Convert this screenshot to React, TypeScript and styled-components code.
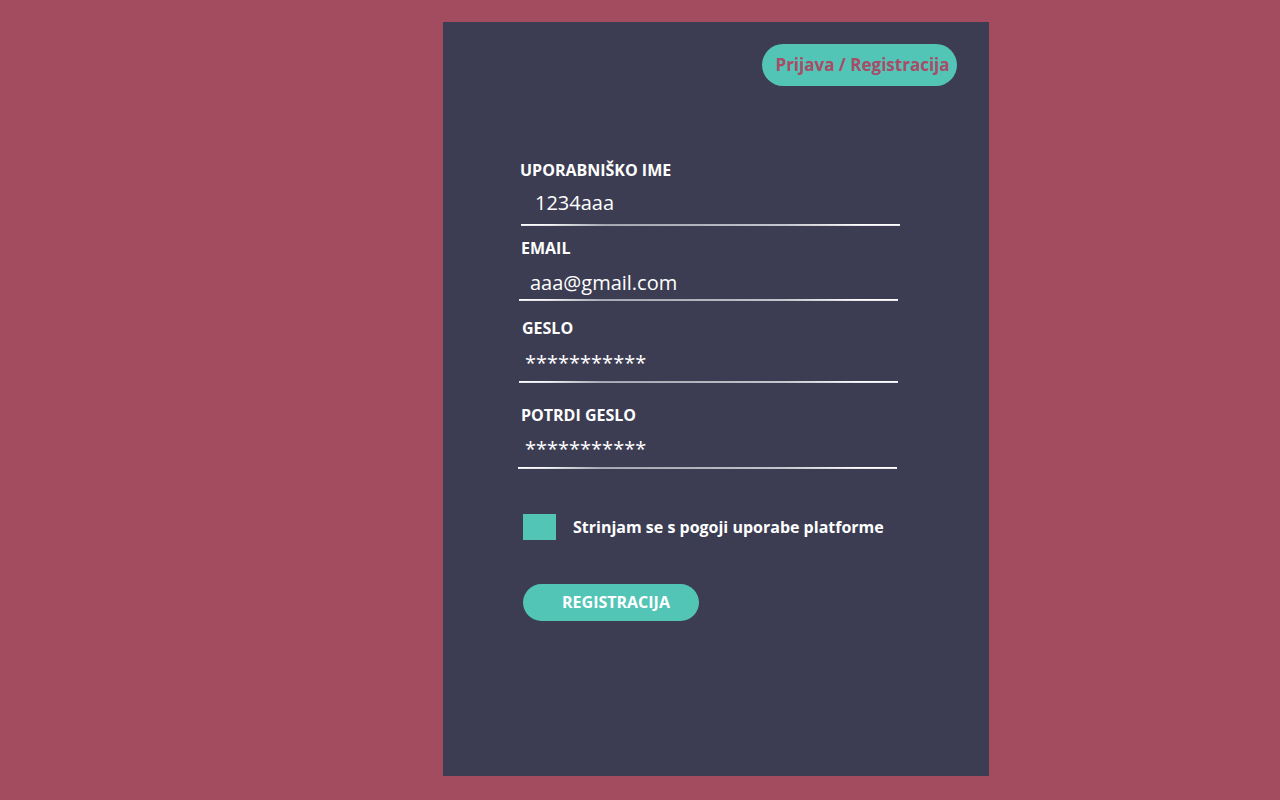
import React from "react";
import styled, { createGlobalStyle } from "styled-components";

const Global = createGlobalStyle`
  html, body { margin: 0; padding: 0; background: #a34b5f; }
  body { font-family: "Open Sans", "Noto Sans", sans-serif; }
`;

const Page = styled.div`
  min-height: 800px;
  box-sizing: border-box;
  padding: 22px 0 0 443px;
  background: #a34b5f;
`;

const Panel = styled.div`
  width: 546px;
  height: 754px;
  background: #3c3d53;
  box-sizing: border-box;
  padding: 22px 32px 0 77px;
  display: flex;
  flex-direction: column;
`;

const Header = styled.div`
  display: flex;
  justify-content: flex-end;
`;

const TopButton = styled.button`
  width: 195px;
  height: 42px;
  border: none;
  border-radius: 21px;
  background: #52c5b7;
  color: #a84c67;
  font-family: "Open Sans", sans-serif;
  font-weight: 700;
  font-size: 17px;
  padding: 0 0 2px 6px;
  white-space: nowrap;
  cursor: pointer;
`;

const Form = styled.form`
  margin-top: 74px;
  width: 382px;
  display: flex;
  flex-direction: column;
`;

const Field = styled.div<{ $gap: number }>`
  display: flex;
  flex-direction: column;
  margin-top: ${(p) => p.$gap}px;
`;

const Label = styled.label<{ $dx: number }>`
  color: #ffffff;
  font-weight: 700;
  font-size: 16px;
  line-height: 20px;
  margin-left: ${(p) => p.$dx}px;
`;

const Value = styled.div<{ $dx: number; $top: number }>`
  color: #ffffff;
  font-size: 20px;
  line-height: 26px;
  margin-top: ${(p) => p.$top}px;
  margin-left: ${(p) => p.$dx}px;
`;

const Underline = styled.div<{ $top: number; $dx: number }>`
  width: 379px;
  height: 1px;
  margin-top: ${(p) => p.$top}px;
  margin-left: ${(p) => p.$dx}px;
  background: linear-gradient(
    90deg,
    #ffffff 0%,
    #f4f4f6 8%,
    #a4a4b0 22%,
    #b0b0ba 45%,
    #c8c8d0 70%,
    #ffffff 90%,
    #ffffff 100%
  );
  border-bottom: 1px solid rgba(190, 190, 200, 0.35);
`;

const CheckRow = styled.div`
  display: flex;
  align-items: center;
  margin-top: 45px;
  margin-left: 3px;
  gap: 17px;
`;

const Box = styled.span`
  width: 33px;
  height: 26px;
  background: #52c5b7;
  display: block;
`;

const CheckText = styled.span`
  color: #ffffff;
  font-weight: 700;
  font-size: 16px;
`;

const Submit = styled.button`
  align-self: flex-start;
  margin-top: 44px;
  margin-left: 3px;
  width: 176px;
  height: 37px;
  border: none;
  border-radius: 19px;
  background: #52c5b7;
  color: #ffffff;
  font-family: "Open Sans", sans-serif;
  font-weight: 700;
  font-size: 16px;
  padding: 0 0 1px 10px;
  cursor: pointer;
`;

const fields = [
  { label: "UPORABNIŠKO IME", value: "1234aaa", gap: 0, ldx: 0, vdx: 15, vtop: 10, ltop: 8, lnx: 1 },
  { label: "EMAIL", value: "aaa@gmail.com", gap: 12, ldx: 1, vdx: 10, vtop: 12, ltop: 3, lnx: -1 },
  { label: "GESLO", value: "***********", gap: 17, ldx: 2, vdx: 5, vtop: 12, ltop: 5, lnx: -1 },
  { label: "POTRDI GESLO", value: "***********", gap: 22, ldx: 1, vdx: 5, vtop: 11, ltop: 5, lnx: -2 },
];

export default function App() {
  return (
    <>
      <Global />
      <Page>
        <Panel>
          <Header>
            <TopButton type="button">Prijava / Registracija</TopButton>
          </Header>
          <Form onSubmit={(e) => e.preventDefault()}>
            {fields.map((f) => (
              <Field key={f.label} $gap={f.gap}>
                <Label $dx={f.ldx}>{f.label}</Label>
                <Value $dx={f.vdx} $top={f.vtop}>
                  {f.value}
                </Value>
                <Underline $top={f.ltop} $dx={f.lnx} />
              </Field>
            ))}
            <CheckRow>
              <Box />
              <CheckText>Strinjam se s pogoji uporabe platforme</CheckText>
            </CheckRow>
            <Submit type="submit">REGISTRACIJA</Submit>
          </Form>
        </Panel>
      </Page>
    </>
  );
}
